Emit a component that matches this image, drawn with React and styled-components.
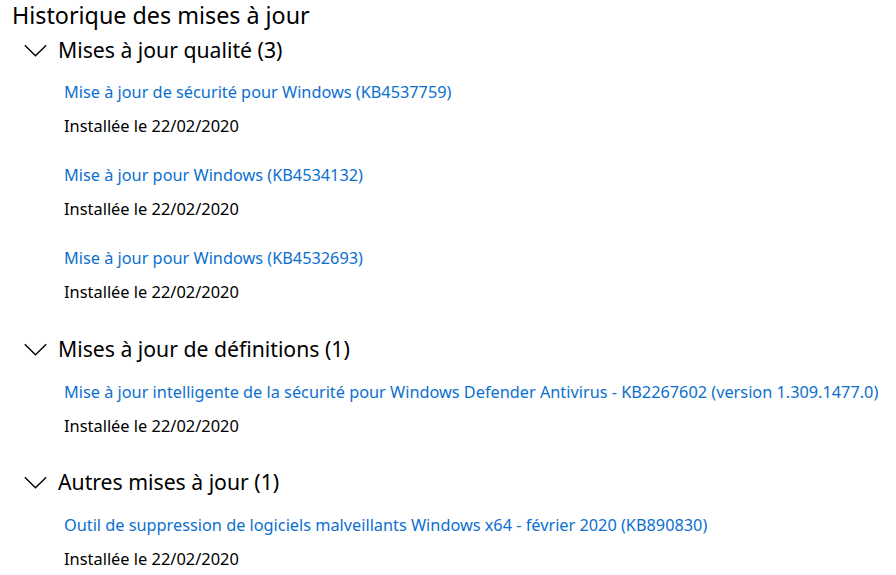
import React from 'react';
import styled, { createGlobalStyle } from 'styled-components';

const GlobalStyle = createGlobalStyle`
  body {
    margin: 0;
    background: #ffffff;
    font-family: 'Noto Sans', 'Open Sans', sans-serif;
    color: #000000;
  }
`;

const Page = styled.div`
  padding: 0 0 0 12px;
  width: 896px;
  height: 575px;
  box-sizing: border-box;
  overflow: hidden;
`;

const Title = styled.h1`
  margin: 0;
  font-size: 23.3px;
  font-weight: 400;
  line-height: 30px;
`;

const Section = styled.section`
  margin-top: ${(p) => p.gap}px;
`;

const SectionHeader = styled.div`
  display: flex;
  align-items: center;
  height: 34px;
  padding-left: 12px;
  gap: 11px;
`;

const SectionTitle = styled.span`
  font-size: 21.2px;
  line-height: 34px;
`;

const Items = styled.ul`
  list-style: none;
  margin: ${(p) => p.offset}px 0 0;
  padding-left: 52px;
`;

const Item = styled.li`
  & + & {
    margin-top: 29px;
  }
`;

const UpdateLink = styled.a`
  display: block;
  color: #0b6fcf;
  font-size: 16.3px;
  line-height: 20px;
  white-space: nowrap;
  text-decoration: none;
  cursor: pointer;
`;

const Installed = styled.div`
  margin-top: 14px;
  font-size: 16.4px;
  line-height: 20px;
`;

const Chevron = () => (
  <svg width="23" height="13" viewBox="0 0 23 13">
    <path d="M0.8 1.2 L11.5 11.8 L22.2 1.2" fill="none" stroke="#000" strokeWidth="1.4" />
  </svg>
);

const sections = [
  {
    title: 'Mises à jour qualité (3)',
    gap: 3,
    offset: 15,
    items: [
      'Mise à jour de sécurité pour Windows (KB4537759)',
      'Mise à jour pour Windows (KB4534132)',
      'Mise à jour pour Windows (KB4532693)',
    ],
  },
  {
    title: 'Mises à jour de définitions (1)',
    gap: 30,
    offset: 16,
    items: [
      'Mise à jour intelligente de la sécurité pour Windows Defender Antivirus - KB2267602 (version 1.309.1477.0)',
    ],
  },
  {
    title: 'Autres mises à jour (1)',
    gap: 29,
    offset: 16,
    items: [
      'Outil de suppression de logiciels malveillants Windows x64 - février 2020 (KB890830)',
    ],
  },
];

export default function App() {
  return (
    <>
      <GlobalStyle />
      <Page>
        <Title>Historique des mises à jour</Title>
        {sections.map((section) => (
          <Section key={section.title} gap={section.gap}>
            <SectionHeader>
              <Chevron />
              <SectionTitle>{section.title}</SectionTitle>
            </SectionHeader>
            <Items offset={section.offset}>
              {section.items.map((name) => (
                <Item key={name}>
                  <UpdateLink>{name}</UpdateLink>
                  <Installed>Installée le 22/02/2020</Installed>
                </Item>
              ))}
            </Items>
          </Section>
        ))}
      </Page>
    </>
  );
}
